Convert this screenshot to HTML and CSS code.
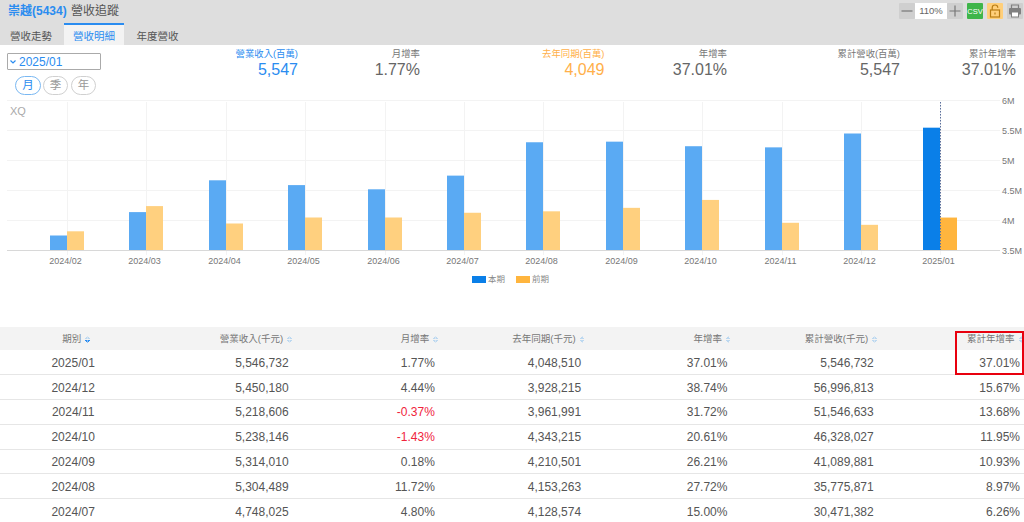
FILE: index.html
```html
<!DOCTYPE html>
<html lang="zh-Hant">
<head>
<meta charset="utf-8">
<title>崇越(5434) 營收追蹤</title>
<link rel="stylesheet" href="styles.css">
</head>
<body>
<div class="page">
  <header class="topbar">
    <div class="title-row">
      <h1 class="title"><span class="stock">崇越(5434)</span> 營收追蹤</h1>
      <div class="tools">
        <button class="tool"><svg width="16" height="16" viewBox="0 0 16 16"><path d="M2.5 8h11" stroke="#777" stroke-width="1.2"/></svg></button>
        <span class="zoom-val">110%</span>
        <button class="tool"><svg width="16" height="16" viewBox="0 0 16 16"><path d="M2.5 8h11M8 2.5v11" stroke="#777" stroke-width="1.2"/></svg></button>
        <span class="tool csv">CSV</span>
        <span class="tool lock"><svg width="16" height="16" viewBox="0 0 16 16"><path d="M5.2 7V4.8a2.8 2.8 0 0 1 5.6 0" fill="none" stroke="#b87c14" stroke-width="1.2"/><rect x="3.5" y="7" width="9" height="7" fill="none" stroke="#b87c14" stroke-width="1.2"/><path d="M8 9.5v2" stroke="#b87c14" stroke-width="1.2"/></svg></span>
        <span class="tool print"><svg width="16" height="16" viewBox="0 0 16 16"><path d="M4.5 5V2h7v3" fill="none" stroke="#808080" stroke-width="1.2"/><rect x="2" y="5" width="12" height="6.5" rx="1" fill="#808080"/><rect x="4.5" y="9" width="7" height="5" fill="#fff" stroke="#808080"/></svg></span>
      </div>
    </div>
    <nav class="tabs">
      <a class="tab">營收走勢</a>
      <a class="tab active">營收明細</a>
      <a class="tab">年度營收</a>
    </nav>
  </header>

  <section class="summary">
    <div class="controls">
      <div class="select"><svg class="chev" width="6" height="4" viewBox="0 0 6 4"><path d="M.5.5 3 3 5.5.5" fill="none" stroke="#2a8cf0" stroke-width="1.2"/></svg>2025/01</div>
      <div class="pills">
        <span class="pill on">月</span><span class="pill">季</span><span class="pill">年</span>
      </div>
    </div>
    <div class="stats">
      <div class="stat blue s1"><div class="lbl">營業收入(百萬)</div><div class="val">5,547</div></div>
      <div class="stat s2"><div class="lbl">月增率</div><div class="val">1.77%</div></div>
      <div class="stat orange s3"><div class="lbl">去年同期(百萬)</div><div class="val">4,049</div></div>
      <div class="stat s4"><div class="lbl">年增率</div><div class="val">37.01%</div></div>
      <div class="stat s5"><div class="lbl">累計營收(百萬)</div><div class="val">5,547</div></div>
      <div class="stat s6"><div class="lbl">累計年增率</div><div class="val">37.01%</div></div>
    </div>
  </section>

  <section class="chart">
    <svg class="chart-svg" id="chart" width="1024" height="178" viewBox="0 97 1024 178"></svg>
    <div class="legend">
      <span class="lg"><i class="sw sw-b"></i>本期</span>
      <span class="lg"><i class="sw sw-o"></i>前期</span>
    </div>
  </section>

  <section class="table-wrap">
    <table class="data">
      <thead>
        <tr>
          <th class="c"><span>期別</span><i class="sort active"></i></th>
          <th><span>營業收入(千元)</span><i class="sort"></i></th>
          <th><span>月增率</span><i class="sort"></i></th>
          <th><span>去年同期(千元)</span><i class="sort"></i></th>
          <th><span>年增率</span><i class="sort"></i></th>
          <th><span>累計營收(千元)</span><i class="sort"></i></th>
          <th><span>累計年增率</span><i class="sort"></i></th>
        </tr>
      </thead>
      <tbody>
        <tr><td class="c">2025/01</td><td>5,546,732</td><td>1.77%</td><td>4,048,510</td><td>37.01%</td><td>5,546,732</td><td>37.01%</td></tr>
        <tr><td class="c">2024/12</td><td>5,450,180</td><td>4.44%</td><td>3,928,215</td><td>38.74%</td><td>56,996,813</td><td>15.67%</td></tr>
        <tr><td class="c">2024/11</td><td>5,218,606</td><td class="neg">-0.37%</td><td>3,961,991</td><td>31.72%</td><td>51,546,633</td><td>13.68%</td></tr>
        <tr><td class="c">2024/10</td><td>5,238,146</td><td class="neg">-1.43%</td><td>4,343,215</td><td>20.61%</td><td>46,328,027</td><td>11.95%</td></tr>
        <tr><td class="c">2024/09</td><td>5,314,010</td><td>0.18%</td><td>4,210,501</td><td>26.21%</td><td>41,089,881</td><td>10.93%</td></tr>
        <tr><td class="c">2024/08</td><td>5,304,489</td><td>11.72%</td><td>4,153,263</td><td>27.72%</td><td>35,775,871</td><td>8.97%</td></tr>
        <tr><td class="c">2024/07</td><td>4,748,025</td><td>4.80%</td><td>4,128,574</td><td>15.00%</td><td>30,471,382</td><td>6.26%</td></tr>
      </tbody>
    </table>
    <div class="highlight"></div>
  </section>
</div>
<script>
var data=[["2024/02",3.75,3.82],["2024/03",4.14,4.24],["2024/04",4.67,3.95],["2024/05",4.59,4.05],["2024/06",4.52,4.05],["2024/07",4.748,4.129],["2024/08",5.304,4.153],["2024/09",5.314,4.211],["2024/10",5.238,4.343],["2024/11",5.219,3.962],["2024/12",5.45,3.928],["2025/01",5.547,4.049]];
var Y=function(v){return 250.5-(v-3.5)*60};
var s="";
["6M","5.5M","5M","4.5M","4M"].forEach(function(t,i){var v=6-i*.5;s+='<line x1="7" x2="1000" y1="'+Y(v)+'" y2="'+Y(v)+'" stroke="#f3f3f3"/>';});
data.forEach(function(d,i){var x=Math.round(67+79.4*i)+.5;s+='<line x1="'+x+'" x2="'+x+'" y1="102" y2="255" stroke="#f3f3f3"/>';});
data.forEach(function(d,i){var x=Math.round(67+79.4*i),last=i==data.length-1;
s+='<rect x="'+(x-17)+'" y="'+Y(d[1])+'" width="17" height="'+(250.5-Y(d[1]))+'" fill="'+(last?"#0a7fe8":"#5aaaf3")+'"/>';
s+='<rect x="'+x+'" y="'+Y(d[2])+'" width="17" height="'+(250.5-Y(d[2]))+'" fill="'+(last?"#ffb53e":"#ffd07f")+'"/>';
s+='<text class="ax" x="'+(x-1.5)+'" y="264" text-anchor="middle">'+d[0]+'</text>';});
s+='<line x1="7" x2="1000" y1="250.5" y2="250.5" stroke="#d8d8d8"/>';
s+='<line x1="940.5" x2="940.5" y1="102" y2="250" stroke="#5a6f9c" stroke-dasharray="1.5 1.5"/>';
["6M","5.5M","5M","4.5M","4M","3.5M"].forEach(function(t,i){s+='<text class="ax" x="1002" y="'+(Y(6-i*.5)+3.5)+'">'+t+'</text>';});
s+='<text class="wm" x="10" y="115">XQ</text>';
document.getElementById("chart").innerHTML=s;
</script>
</body>
</html>
```

FILE: styles.css
```css
* { box-sizing: border-box; }
html, body { margin: 0; padding: 0; height: 522px; overflow: hidden; background: #fff; }
body { font-family: "Liberation Sans", "Noto Sans CJK TC", sans-serif; color: #555; }
.page { width: 1024px; height: 522px; overflow: hidden; }

.topbar { background: #dedede; height: 45px; display: flex; flex-direction: column; }
.title-row { height: 23px; display: flex; justify-content: space-between; padding: 3px 1px 0 8px; }
.title { margin: 1px 0 0; font-size: 12px; font-weight: normal; line-height: 15px; color: #555; word-spacing: 1px; }
.stock { color: #2a8cf0; font-weight: bold; }
.tools { display: flex; height: 16px; }
.tool { width: 16px; height: 16px; padding: 0; border: 0; background: #cfcfcf; display: flex; align-items: center; justify-content: center; border-radius: 1px; margin: 0; }
.zoom-val { width: 32px; height: 16px; background: #fff; font-size: 9.5px; line-height: 16px; text-align: center; color: #666; }
.csv { background: #3fb54a; color: #fff; font-size: 7.5px; font-weight: normal; margin-left: 4px; }
.lock { background: #ffcf7a; margin-left: 4px; }
.print { margin-left: 4px; background: #cfcfcf; }

.tabs { display: flex; height: 22px; }
.tab { width: 60px; font-size: 10.5px; line-height: 26px; text-align: center; color: #555; margin-right: 2px; }
.tab:first-child { margin-right: 2px; width: 62px; }
.tab.active { background: #f3f3f3; border-top: 2px solid #2a8cf0; line-height: 23px; color: #2a8cf0; margin-right: 3.5px; }

.summary { height: 52px; display: flex; }
.controls { width: 110px; flex: none; padding: 8px 0 0 7px; }
.select { width: 94px; height: 17px; border: 1px solid #aaa; border-radius: 1px; display: flex; align-items: center; gap: 3px; padding-left: 2px; font-size: 12px; color: #2a8cf0; }
.pills { display: flex; margin: 6px 0 0 8px; }
.pill { width: 25px; height: 19px; border: 1px solid #d0d0d0; border-radius: 10px; font-size: 11.5px; line-height: 17px; text-align: center; color: #999; margin-right: 3px; }
.pill.on { border-color: #7ab8f2; color: #2a8cf0; width: 26px; margin-right: 2px; }

.stats { flex: 1; display: grid; grid-template-columns: 188px 122px 184.5px 122.5px 173px 116px; padding-top: 3px; align-content: start; }
.stat { text-align: right; color: #666; }
.lbl { font-size: 9.4px; line-height: 12px; color: #777; }
.val { font-size: 16px; line-height: 19px; }
.blue .lbl, .blue .val { color: #2a8cf0; }
.orange .lbl, .orange .val { color: #ffb04a; }

.chart { height: 230px; }
.chart-svg { display: block; }
.ax { font-size: 9px; fill: #777; font-family: "Liberation Sans", sans-serif; }
.wm { font-size: 11px; fill: #aaa; font-family: "Liberation Sans", sans-serif; }
.legend { display: flex; justify-content: center; gap: 11px; font-size: 8.5px; color: #888; line-height: 12px; margin-top: -2px; padding-right: 3px; }
.lg { display: flex; align-items: center; gap: 2px; }
.sw { width: 14px; height: 7px; display: block; }
.sw-b { background: #0a7fe8; }
.sw-o { background: #ffb53e; }

.table-wrap { position: relative; }
.data { width: 1024px; table-layout: fixed; border-collapse: collapse; font-size: 12px; }
.data th { height: 23px; background: #f3f3f3; font-weight: normal; font-size: 9.5px; color: #777; text-align: right; padding: 0 0.5px 2px 0; }
.data td { height: 24.8px; border-bottom: 1px solid #e6e6e6; text-align: right; padding: 1px 4px 0; color: #555; }
.data .c { text-align: center; padding-right: 4px; }
.data th.c { padding: 0 0 2px 6px; }
.neg { color: #f0243c !important; }
.sort { display: inline-block; width: 5px; height: 7px; margin-left: 4px; vertical-align: -1px; background:
  linear-gradient(to bottom right, transparent 50%, #bcd8f0 50%) left top / 50% 3px no-repeat,
  linear-gradient(to bottom left, transparent 50%, #bcd8f0 50%) right top / 50% 3px no-repeat,
  linear-gradient(to top right, transparent 50%, #bcd8f0 50%) left bottom / 50% 3px no-repeat,
  linear-gradient(to top left, transparent 50%, #bcd8f0 50%) right bottom / 50% 3px no-repeat; }
.sort.active { background:
  linear-gradient(to bottom right, transparent 50%, #bcd8f0 50%) left top / 50% 3px no-repeat,
  linear-gradient(to bottom left, transparent 50%, #bcd8f0 50%) right top / 50% 3px no-repeat,
  linear-gradient(to top right, transparent 50%, #2a8cf0 50%) left bottom / 50% 3px no-repeat,
  linear-gradient(to top left, transparent 50%, #2a8cf0 50%) right bottom / 50% 3px no-repeat; }
.highlight { position: absolute; left: 955px; top: 4px; width: 69px; height: 44px; border: 2.5px solid #e8000e; pointer-events: none; }
```
